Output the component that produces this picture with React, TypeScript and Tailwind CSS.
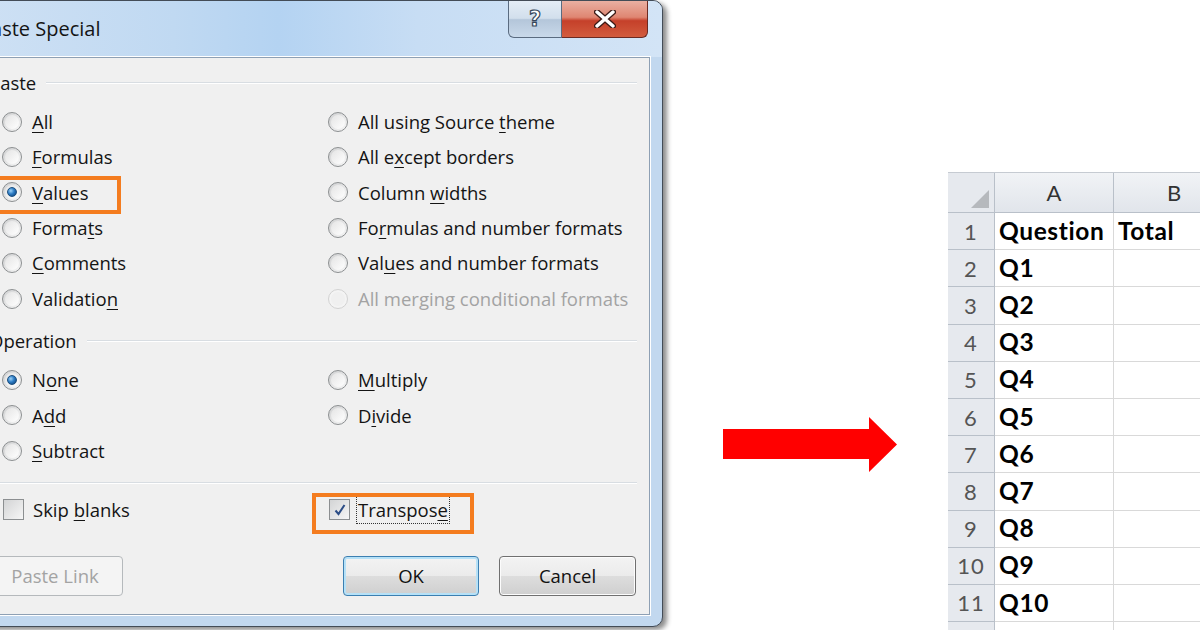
import React from "react";

type Item = { pre: string; k: string; post: string; checked?: boolean; disabled?: boolean; boxed?: boolean };

const pasteRows: [Item, Item][] = [
  [{ pre: "", k: "A", post: "ll" }, { pre: "All using Source ", k: "t", post: "heme" }],
  [{ pre: "", k: "F", post: "ormulas" }, { pre: "All e", k: "x", post: "cept borders" }],
  [{ pre: "", k: "V", post: "alues", checked: true, boxed: true }, { pre: "Column ", k: "w", post: "idths" }],
  [{ pre: "Forma", k: "t", post: "s" }, { pre: "Fo", k: "r", post: "mulas and number formats" }],
  [{ pre: "", k: "C", post: "omments" }, { pre: "Val", k: "u", post: "es and number formats" }],
  [{ pre: "Validatio", k: "n", post: "" }, { pre: "All merging conditional formats", k: "", post: "", disabled: true }],
];

const opRows: [Item, Item | null][] = [
  [{ pre: "N", k: "o", post: "ne", checked: true }, { pre: "", k: "M", post: "ultiply" }],
  [{ pre: "A", k: "d", post: "d" }, { pre: "D", k: "i", post: "vide" }],
  [{ pre: "", k: "S", post: "ubtract" }, null],
];

function Text({ item }: { item: Item }) {
  return (
    <span className={item.disabled ? "text-[#a3a3a3]" : "text-[#141414]"}>
      {item.pre}
      {item.k && <span className="underline decoration-1 underline-offset-[3px]">{item.k}</span>}
      {item.post}
    </span>
  );
}

function Radio({ checked, disabled }: { checked?: boolean; disabled?: boolean }) {
  return (
    <span
      className={`flex h-[20px] w-[20px] shrink-0 items-center justify-center rounded-full border ${
        disabled ? "border-[#d2d2d2] bg-[#f4f4f4]" : "border-[#8c8f91] bg-[linear-gradient(135deg,#cfd0d1,#f7f7f7)]"
      }`}
    >
      <span
        className={`flex h-[14px] w-[14px] items-center justify-center rounded-full ${
          disabled ? "bg-[#f0f0f0]" : "bg-[linear-gradient(135deg,#e4e4e4,#ffffff)]"
        }`}
      >
        {checked && (
          <span className="h-[10px] w-[10px] rounded-full border border-[#1c4f7f] bg-[radial-gradient(circle_at_35%_35%,#9fd3f7_0%,#2b7bc4_45%,#0d3c6e_100%)]" />
        )}
      </span>
    </span>
  );
}

function Checkbox({ checked }: { checked?: boolean }) {
  return (
    <span className="flex h-[21px] w-[21px] shrink-0 items-center justify-center border border-[#8c8f91] bg-[linear-gradient(135deg,#d3d4d5,#f6f6f6)]">
      {checked && (
        <svg width="14" height="14" viewBox="0 0 14 14">
          <path d="M2.5 7.5 L5.5 11 L11.5 2" fill="none" stroke="#2c4d86" strokeWidth="2" />
        </svg>
      )}
    </span>
  );
}

function Option({ item, left }: { item: Item; left: boolean }) {
  return (
    <div className={`relative flex items-center gap-[10px] ${left ? "pl-[13px]" : "-ml-[1px]"}`}>
      <Radio checked={item.checked} disabled={item.disabled} />
      <Text item={item} />
      {item.boxed && (
        <span className="absolute left-[3px] top-[1px] h-[38px] w-[129px] border-4 border-[#f47c1f]" />
      )}
    </div>
  );
}

function GroupLabel({ text }: { text: string }) {
  return (
    <div className="flex h-[24px] items-center">
      <span className="text-[#141414]">{text}</span>
      <span className="ml-[10px] h-[2px] flex-1 border-t border-b border-t-[#d8dde2] border-b-white" />
    </div>
  );
}

function Button({ children, kind }: { children: React.ReactNode; kind: "disabled" | "default" | "normal" }) {
  const base = "flex h-[40px] items-center justify-center rounded-[4px] border";
  const style =
    kind === "disabled"
      ? "w-[136px] border-[#b5b9bc] bg-[#f4f4f4] text-[#a3a3a3]"
      : kind === "default"
        ? "w-[136px] border-[#3c7fb1] bg-[linear-gradient(to_bottom,#f3f3f3_0%,#ebebeb_50%,#dddddd_51%,#cfcfcf_100%)] text-[#111] shadow-[inset_0_0_0_2px_#b6e1f7]"
        : "w-[137px] border-[#707070] bg-[linear-gradient(to_bottom,#f3f3f3_0%,#ebebeb_50%,#dddddd_51%,#cfcfcf_100%)] text-[#111] shadow-[inset_0_0_0_1px_#fcfcfc]";
  return <div className={`${base} ${style}`}>{children}</div>;
}

function Dialog() {
  return (
    <div className="-ml-[37px] h-[630px] w-[709px] shrink-0 pr-[9px]">
      <div className="flex h-[627px] w-[700px] flex-col rounded-tr-[10px] rounded-br-[10px] border border-[#434c57] bg-[#c2d8ef] shadow-[4px_3px_5px_rgba(0,0,0,0.45)]">
        {/* title bar */}
        <div className="flex h-[56px] items-start justify-between rounded-tr-[9px] bg-[linear-gradient(90deg,#cfe1f4_0%,#c0d9f2_30%,#b4d3f2_45%,#c7ddf4_65%,#d3e4f6_100%)] pl-[15px] pr-[14px]">
          <span className="self-center pb-[1px] text-[20px] text-[#141414]">Paste Special</span>
          <div className="flex h-[37px]">
            <div className="flex w-[54px] items-center justify-center rounded-bl-[6px] border border-t-0 border-[#5a6b80] bg-[linear-gradient(to_bottom,#e4edf6_0%,#d2dfec_48%,#b4c6da_52%,#c9d9ea_100%)]">
              <span className="font-['DejaVu_Sans',sans-serif] text-[21px] font-bold leading-none text-white [-webkit-text-stroke:1.2px_#36465a]">?</span>
            </div>
            <div className="flex w-[86px] items-center justify-center rounded-br-[6px] border border-l-0 border-t-0 border-[#6b2a22] bg-[linear-gradient(to_bottom,#eab0a2_0%,#df8672_45%,#c5402a_55%,#d25c3e_100%)]">
              <svg width="22" height="18" viewBox="0 0 22 18">
                <path d="M3 2 L19 16 M19 2 L3 16" stroke="#3b1a16" strokeWidth="6" strokeLinecap="round" />
                <path d="M3 2 L19 16 M19 2 L3 16" stroke="#ffffff" strokeWidth="3.4" strokeLinecap="round" />
              </svg>
            </div>
          </div>
        </div>
        {/* client area */}
        <div className="mx-[12px] flex h-[558px] flex-col border border-[#8ea0b4] bg-[#f0f0f0] px-[12px] pt-[13px] outline outline-1 outline-white">
          <GroupLabel text="Paste" />
          <div className="mt-[9px] grid grid-cols-[340px_1fr] auto-rows-[35.4px]">
            {pasteRows.map(([l, r], i) => (
              <React.Fragment key={i}>
                <Option item={l} left />
                <Option item={r} left={false} />
              </React.Fragment>
            ))}
          </div>
          <div className="mt-[13px]">
            <GroupLabel text="Operation" />
          </div>
          <div className="mt-[9px] grid grid-cols-[340px_1fr] auto-rows-[35.4px]">
            {opRows.map(([l, r], i) => (
              <React.Fragment key={i}>
                <Option item={l} left />
                {r ? <Option item={r} left={false} /> : <div />}
              </React.Fragment>
            ))}
          </div>
          <div className="mt-[13px] h-[2px] border-t border-b border-t-[#d8dde2] border-b-white" />
          <div className="mt-[6px] grid h-[40px] grid-cols-[340px_1fr] items-center">
            <div className="flex items-center gap-[9px] pl-[14px]">
              <Checkbox />
              <span className="text-[#141414]">
                Skip <span className="underline decoration-1 underline-offset-[3px]">b</span>lanks
              </span>
            </div>
            <div className="relative flex items-center gap-[6px]">
              <Checkbox checked />
              <span className="border border-dotted border-[#333] px-[1px] text-[#141414]">
                Transpos<span className="underline decoration-1 underline-offset-[3px]">e</span>
              </span>
              <span className="absolute -left-[17px] -top-[2px] h-[41px] w-[162px] border-4 border-[#f47c1f]" />
            </div>
          </div>
          <div className="-ml-[2px] mr-[1px] mt-[26px] flex justify-between">
            <Button kind="disabled">Paste Link</Button>
            <div className="flex gap-[20px]">
              <Button kind="default">OK</Button>
              <Button kind="normal">Cancel</Button>
            </div>
          </div>
        </div>
      </div>
    </div>
  );
}

function Arrow() {
  return (
    <svg className="ml-[50px] mt-[417px] shrink-0" width="176" height="56" viewBox="0 0 176 56">
      <polygon points="1,12 147,12 147,0 175,27.5 147,55 147,42 1,42" fill="#ff0000" />
    </svg>
  );
}

const rows = ["Question", "Q1", "Q2", "Q3", "Q4", "Q5", "Q6", "Q7", "Q8", "Q9", "Q10", ""];

function Sheet() {
  return (
    <div className="ml-[50px] mt-[172px] w-[253px] shrink-0 overflow-hidden font-['Lato',sans-serif]">
      <div className="grid w-[300px] grid-cols-[47px_119px_134px] border-t border-[#c6cbd2]">
        <div className="relative h-[40px] border-r border-b border-[#b9c0c9] bg-[#e6e9ee]">
          <svg className="absolute bottom-[4px] right-[5px]" width="18" height="18" viewBox="0 0 18 18">
            <polygon points="18,0 18,18 0,18" fill="#b6b9bd" />
          </svg>
        </div>
        <div className="flex h-[40px] items-center justify-center border-r border-b border-[#b9c0c9] bg-[linear-gradient(to_bottom,#f1f3f6,#e1e5eb)] text-[22px] text-[#333]">
          A
        </div>
        <div className="flex h-[40px] items-center justify-center border-b border-[#b9c0c9] bg-[linear-gradient(to_bottom,#f1f3f6,#e1e5eb)] pr-[14px] text-[22px] text-[#333]">
          B
        </div>
        {rows.map((r, i) => (
          <React.Fragment key={i}>
            <div className="flex h-[37.2px] items-center justify-center border-r border-b border-[#b9c0c9] bg-[#e6e9ee] text-[22px] tracking-[1px] text-[#555]">
              {i + 1 <= 11 ? i + 1 : ""}
            </div>
            <div className="flex h-[37.2px] items-center border-r border-b border-[#d9d9d9] pl-[4px] text-[24.5px] font-bold tracking-[0.6px] text-black">
              {r}
            </div>
            <div className="flex h-[37.2px] items-center border-b border-[#d9d9d9] pl-[4px] text-[24.5px] font-bold tracking-[0.6px] text-black">
              {i === 0 ? "Total" : ""}
            </div>
          </React.Fragment>
        ))}
      </div>
    </div>
  );
}

export default function App() {
  return (
    <div className="flex h-[630px] w-[1200px] items-start overflow-hidden bg-white font-['Open_Sans',sans-serif] text-[18.5px]">
      <Dialog />
      <Arrow />
      <Sheet />
    </div>
  );
}
